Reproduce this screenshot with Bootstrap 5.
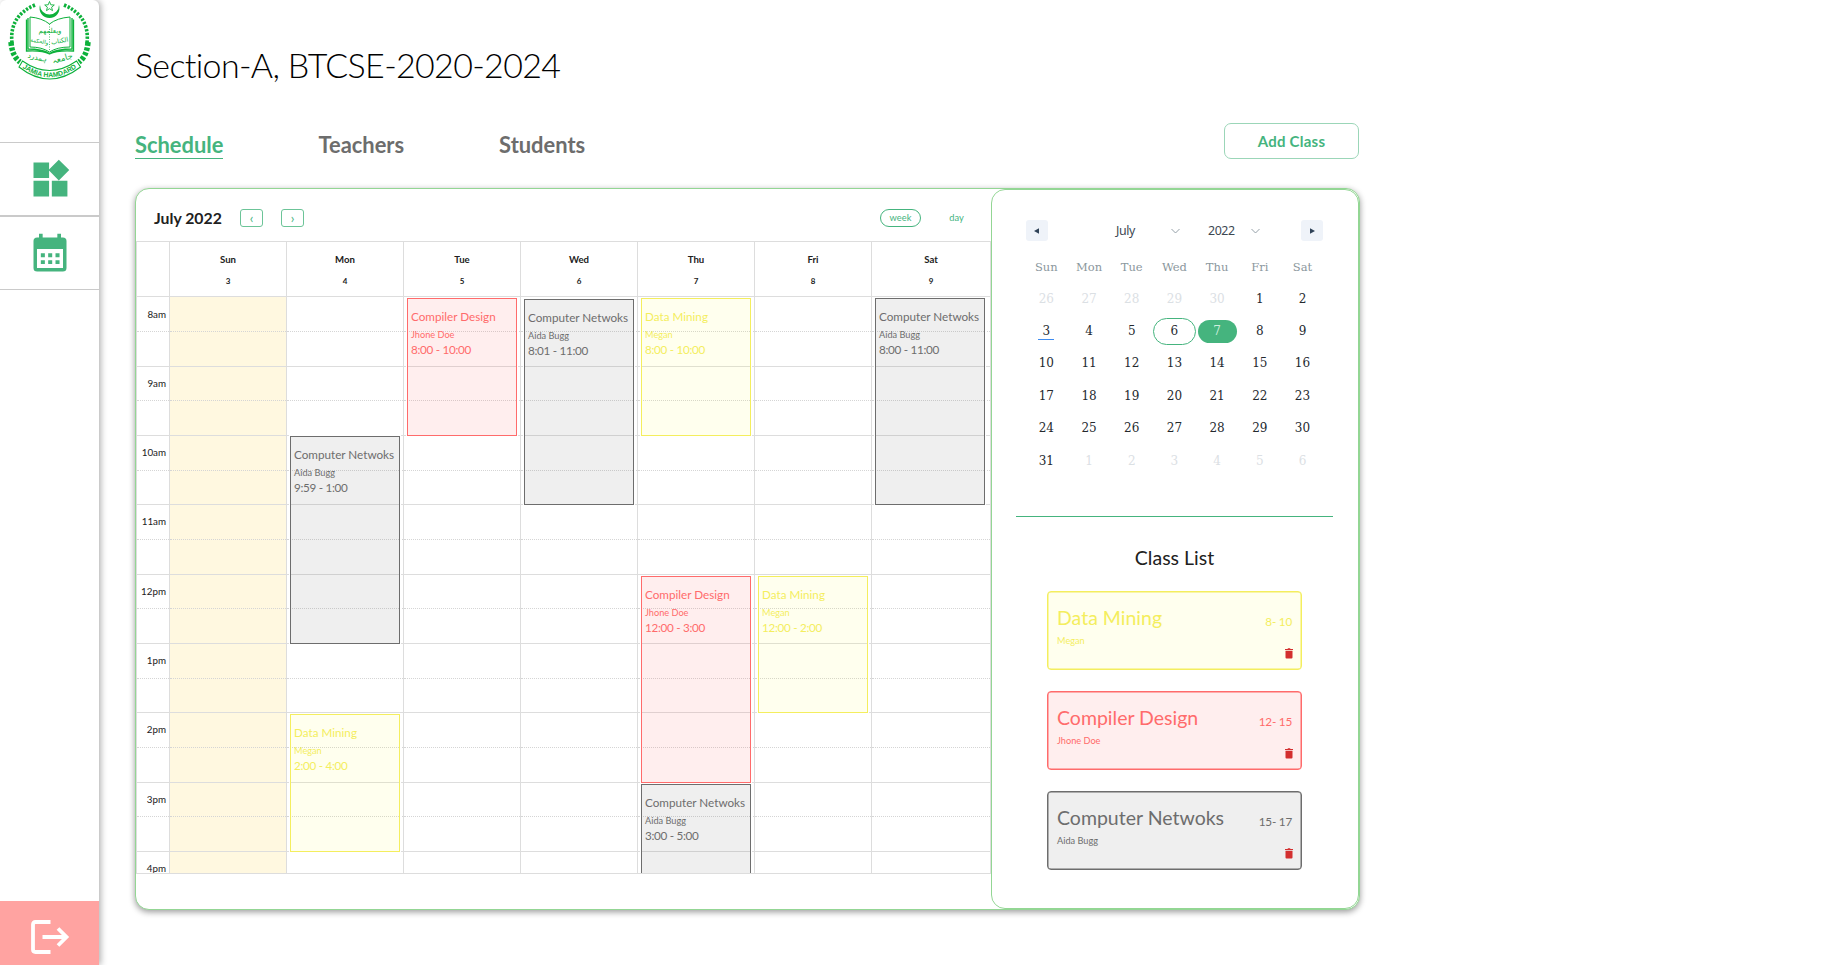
<!DOCTYPE html>
<html lang="en">
<head>
<meta charset="utf-8">
<title>Section-A, BTCSE-2020-2024</title>
<link href="https://cdn.jsdelivr.net/npm/bootstrap@5.3.0/dist/css/bootstrap.min.css" rel="stylesheet">
<style>
:root{--g:#45b47e;--line:#ddd}
body{font-family:Lato,sans-serif;color:#212121;background:#fff;height:965px;overflow:hidden}
.side{width:99px;height:965px;box-shadow:2px 0 6px rgba(0,0,0,.3);border-radius:6px 6px 0 0;background:#fff}
.side-logo{height:142px}
.side-item{height:74px;border-top:1px solid #cacaca;border-bottom:1px solid #cacaca;color:var(--g)}
.side-out{height:64px;background:#ffa3a1;padding-top:8px}
.main{padding-left:36px;width:1261px}
.title{font-size:34px;font-weight:300;line-height:42px;color:#000;margin-top:44px;letter-spacing:-.68px;font-variant-ligatures:none}
.tabs{margin-top:37px;height:36px;width:1224px}
.tab-item{font-size:21.9px;font-weight:700;line-height:26px;color:#6d6d6d;text-decoration:none;border-bottom:1px solid transparent;margin-top:9px}
.tab-item+.tab-item{margin-left:95px}
.tab-item.on{color:var(--g);border-color:var(--g)}
.add{width:135px;height:36px;border:1px solid #9bd6b8;border-radius:7px;color:var(--g);font:700 15px/1 Lato,sans-serif;letter-spacing:.25px;background:#fff}
.board{width:1225px;height:722px;margin-top:29px;border:1px solid #93d694;border-radius:14px;box-shadow:0 2px 6px rgba(0,0,0,.4);background:#fff}
.cal{width:855px}
.cal-head{height:52px;padding:5px 14px 0 18px}
.cal-title{font-size:15.8px;font-weight:700;width:86px;white-space:nowrap}
.mini-btn{width:23px;height:18px;border:1px solid #6cc498;border-radius:3px;color:var(--g);font-size:13px;line-height:17px;text-align:center}
.mini-btn+.mini-btn{margin-left:18px}
.pill{width:41px;height:18px;border-radius:9px;font-size:9.3px;line-height:16px;text-align:center;color:var(--g);border:1px solid transparent}
.pill+.pill{margin-left:15px}
.pill.on{border-color:var(--g)}
.week{display:grid;grid-template-columns:33px repeat(6,117px) 118px;border:1px solid var(--line);width:855px}
.week-head>div{height:54px;border-right:1px solid var(--line);font-weight:700;font-size:9.6px;text-align:center;padding-top:11px;line-height:14px}
.week-head>div:last-child,.week-body>div:last-child{border-right:0}
.week-head span{display:block;margin-top:8px;font-size:8px;line-height:13px}
.week-body{height:578px;overflow:hidden;margin-top:-1px}
.week-body>div{border-right:1px solid var(--line);height:625px;position:relative;padding-top:.6px}
.hour{height:69.3px;border-bottom:1px solid var(--line)}
.hour::before{content:"";display:block;height:34.6px;border-bottom:1px dotted #d5d5d5}
.times .hour{position:relative}
.times .hour b{position:absolute;right:3px;top:9px;font-size:9.8px;line-height:14px;font-weight:400}
.today{background:#fff8e0}
.ev{position:absolute;left:3px;width:110px;border:1px solid;padding:8px 0 0 3px;font-size:11.7px;line-height:18px;box-shadow:0 0 0 1px #fff;white-space:nowrap;overflow:hidden}
.ev small{display:block;font-size:9.2px;line-height:13.5px;margin:3px 0 -1.300px}
.ev time{letter-spacing:-.3px}
.red{color:#ff6b6b;background:rgba(255,92,92,.1)}
.yel{color:#f4ee5e;background:rgba(250,250,60,.085)}
.gry{color:#6d6d6d;background:rgba(96,96,96,.1)}
.panel{width:368px;border:1px solid #93d694;border-radius:14px;padding:30px 25px 0 24px}
.nav-b{width:22px;height:21px;background:#eff3f9;border-radius:3px}
.sel{font:12.4px/21px "Noto Sans",sans-serif;color:#3d4852;letter-spacing:-.4px}
.sel-m{margin-left:68px;width:55px}
.sel-y{margin-left:28px;width:43px}
.mini{display:grid;grid-template-columns:repeat(7,42.7px);font:12px/32.4px "DejaVu Serif",serif;text-align:center;color:#24292e;margin:11px 0 0 9px}
.mini .dn{color:#8b979d;font-size:11.5px;line-height:30.6px}
.mini .off{color:#dbe0e4}
.mini .cur,.mini .pick{align-self:center;justify-self:center;border-radius:14px}
.mini .cur{width:43px;height:27px;line-height:25px;border:1px solid var(--g)}
.mini .pick{width:39px;height:23px;line-height:23px;background:var(--g);color:#cfeedd}
.mini u{display:inline-block;text-decoration:none;width:16px;line-height:15px;border-bottom:1px solid #3d8bf0}
.rule{height:1px;background:var(--g);margin-top:39px}
.cl-title{font-size:19.5px;line-height:26px;margin:28px 0 20px}
.cls{width:255px;height:79px;margin:0 0 21px 31px;border:1px solid;border-radius:4px;padding:14px 9px 0 9px;box-shadow:inset 0 0 0 .5px}
.cls h3{font-size:19.5px;font-weight:400;line-height:24px;margin:0}
.cls p{font-size:9.2px;line-height:14px;margin:4px 0 0}
.cls time{font-size:11.7px;line-height:18px;margin-top:6px;letter-spacing:-.2px}
.bin{display:block;margin:0 0 0 227px}
</style>
</head>
<body>
<div class="d-flex">
<aside class="side d-flex flex-column flex-shrink-0">
  <div class="side-logo">
    <svg width="99" height="90" viewBox="0 0 99 90" fill="none" stroke="#0db13b">
      <path d="M40 5a10 10 0 1 0 19 0a9 9 0 0 1-19 0z" fill="#0db13b" stroke="none"/>
      <path d="M49.500 1.500l1.300 3.300 3.500.2-2.700 2.200.9 3.400-3-1.900-3 1.900.9-3.400-2.700-2.200 3.500-.2z" stroke-width=".9"/>
      <path d="M35 5Q9 16 12 43" stroke-width="3.600" stroke-dasharray="2.300 1.500"/>
      <path d="M64 5Q90 16 87 43" stroke-width="3.600" stroke-dasharray="2.300 1.500"/>
      <path d="M11 42Q12 56 20 62M88 42Q87 56 79 62" stroke-width="5.500" stroke-dasharray="3.500 1.600"/>
      <path d="M30 17Q42 18 49.500 24Q57 18 70 17V47Q57 47 49.500 52Q42 47 30 47Z"/>
      <path d="M28 18V49Q42 49 49.500 53.500Q57 49 72 49V18M26.500 19.500V51Q42 50 49.500 54Q57 50 73.500 51V19.500" stroke-width="1.300"/>
      <path d="M49.500 24V51" stroke-width=".7" stroke-dasharray="1 1.500"/>
      <g fill="#0db13b" stroke="none" font-family="DejaVu Sans" text-anchor="middle" direction="rtl">
        <text x="50" y="33" font-size="7">ويعلمهم</text>
        <text x="60" y="43" font-size="6.500" transform="rotate(-10 60 43)">الكتاب</text>
        <text x="39" y="43" font-size="5.400" transform="rotate(10 39 43)">والحكمة</text>
        <text x="63" y="61" font-size="8.500" transform="rotate(-16 63 61)">جامعہ</text>
        <text x="37" y="60" font-size="7.500" transform="rotate(14 37 60)">ہمدرد</text>
      </g>
      <path d="M22.500 61Q49.500 80 76.500 61L80.500 67Q49.500 91 19 67Z" stroke-width="1.100"/>
      <path id="rib" d="M22 67.500Q49.500 87 77 67.500" stroke="none"/>
      <text font-family="Liberation Sans" font-weight="700" font-size="6.900" fill="#0db13b" stroke="none" text-anchor="middle"><textPath href="#rib" startOffset="50%">JAMIA HAMDARD</textPath></text>
    </svg>
  </div>
  <div class="side-item d-flex align-items-center justify-content-center">
    <svg width="44" height="44" viewBox="0 0 24 24" fill="currentColor"><path d="M13 13v8.500h8.500V13zM3 21.500h8.500V13H3zM3 3v8.500h8.500V3zM16.800 1.500l-5.600 5.600 5.600 5.700 5.700-5.700z"/></svg>
  </div>
  <div class="side-item d-flex align-items-center justify-content-center">
    <svg width="44" height="42" viewBox="0 0 24 24" preserveAspectRatio="none" fill="currentColor"><path fill-rule="evenodd" d="M19 3.200h-1V1h-2v2.200H8V1H6v2.200H5a2 2 0 0 0-2 2V20.500a2 2 0 0 0 2 2h14a2 2 0 0 0 2-2V5.200a2 2 0 0 0-2-2zM19.100 20.500H4.900V9.700h14.200zM7 12.200h2.200v2.200H7zm4 0h2.200v2.200H11zm4 0h2.200v2.200H15zM7 16.100h2.200v2.200H7zm4 0h2.200v2.200H11zm4 0h2.200v2.200H15z"/></svg>
  </div>
  <div class="side-out mt-auto d-flex align-items-center justify-content-center">
    <svg width="40" height="36" viewBox="0 0 40 36" fill="none" stroke="#fff" stroke-width="3.800"><path d="M20.500 3H5.500Q3 3 3 5.500V30.500Q3 33 5.500 33H20.500"/><path d="M12.500 18H36M28 9.500L36.500 18L28 26.500"/></svg>
  </div>
</aside>
<main class="main">
  <h1 class="title mb-0">Section-A, BTCSE-2020-2024</h1>
  <div class="tabs d-flex align-items-start">
    <a class="tab-item on">Schedule</a>
    <a class="tab-item">Teachers</a>
    <a class="tab-item">Students</a>
    <button class="add ms-auto">Add Class</button>
  </div>
  <section class="board d-flex">
    <div class="cal flex-shrink-0">
      <div class="cal-head d-flex align-items-center">
        <span class="cal-title">July 2022</span>
        <span class="mini-btn">‹</span><span class="mini-btn">›</span>
        <span class="pill on ms-auto">week</span><span class="pill">day</span>
      </div>
      <div class="week week-head"><div></div><div>Sun<span>3</span></div><div>Mon<span>4</span></div><div>Tue<span>5</span></div><div>Wed<span>6</span></div><div>Thu<span>7</span></div><div>Fri<span>8</span></div><div>Sat<span>9</span></div></div>
      <div class="week week-body" id="body"></div>
    </div>
    <aside class="panel">
      <div class="d-flex align-items-center" style="padding:0 10px">
        <span class="nav-b d-flex align-items-center justify-content-center"><svg width="6" height="6"><path d="M0 3L5 .3V5.700z" fill="#2f4257"/></svg></span>
        <span class="sel sel-m">July</span>
        <svg width="9" height="6" fill="none" stroke="#95a0a8"><path d="M.5 1l4 4 4-4"/></svg>
        <span class="sel sel-y">2022</span>
        <svg width="9" height="6" fill="none" stroke="#95a0a8"><path d="M.5 1l4 4 4-4"/></svg>
        <span class="nav-b d-flex align-items-center justify-content-center ms-auto"><svg width="6" height="6"><path d="M6 3L1 .3V5.700z" fill="#2f4257"/></svg></span>
      </div>
      <div class="mini" id="mini"></div>
      <div class="rule"></div>
      <div class="cl-title text-center">Class List</div>
      <div id="list"></div>
    </aside>
  </section>
</main>
</div>
<script>
const kinds={red:['Compiler Design','Jhone Doe'],yel:['Data Mining','Megan'],gry:['Computer Netwoks','Aida Bugg']};
const H=69.3;
// day index, kind, start and end in hours after 8am, label
const events=[[1,'gry',1.99,5,'9:59 - 1:00'],[1,'yel',6,8,'2:00 - 4:00'],[2,'red',0,2,'8:00 - 10:00'],[3,'gry',.01,3,'8:01 - 11:00'],[4,'yel',0,2,'8:00 - 10:00'],[4,'red',4,7,'12:00 - 3:00'],[4,'gry',7,9,'3:00 - 5:00'],[5,'yel',4,6,'12:00 - 2:00'],[6,'gry',0,3,'8:00 - 11:00']];
const labels=['8am','9am','10am','11am','12pm','1pm','2pm','3pm','4pm'];
let h='<div class="times">'+labels.map(l=>`<div class="hour"><b>${l}</b></div>`).join('')+'</div>';
for(let d=0;d<7;d++){
  h+=`<div class="${d?'':'today'}">`+'<div class="hour"></div>'.repeat(9);
  for(const [day,k,s,e,t] of events) if(day===d){
    const top=Math.ceil(s*H+1);
    h+=`<div class="ev ${k}" style="top:${top}px;height:${Math.ceil(e*H)-top}px">${kinds[k][0]}<small>${kinds[k][1]}</small><time>${t}</time></div>`;
  }
  h+='</div>';
}
document.getElementById('body').innerHTML=h;
let m=['Sun','Mon','Tue','Wed','Thu','Fri','Sat'].map(x=>`<span class="dn">${x}</span>`).join('');
for(let i=0;i<42;i++){
  const n=i-4,off=n<1||n>31,v=n<1?n+30:n>31?n-31:n;
  m+=`<span class="${off?'off':n===6?'cur':n===7?'pick':''}">${n===3?'<u>3</u>':v}</span>`;
}
document.getElementById('mini').innerHTML=m;
document.getElementById('list').innerHTML=[['yel','8- 10'],['red','12- 15'],['gry','15- 17']].map(([k,t])=>
 `<div class="cls ${k}"><div class="d-flex justify-content-between"><h3>${kinds[k][0]}</h3><time>${t}</time></div><p>${kinds[k][1]}</p><svg class="bin" width="10" height="11" viewBox="0 0 10 11" fill="#d32f2f"><path d="M1 1H3.500L4 .3H6L6.500 1H9V2H1zM1.500 2.700H8.500V9.500Q8.500 10.500 7.500 10.500H2.500Q1.500 10.500 1.500 9.500z"/></svg></div>`).join('');
</script>
<script src="https://cdn.jsdelivr.net/npm/bootstrap@5.3.0/dist/js/bootstrap.bundle.min.js"></script>
</body>
</html>
